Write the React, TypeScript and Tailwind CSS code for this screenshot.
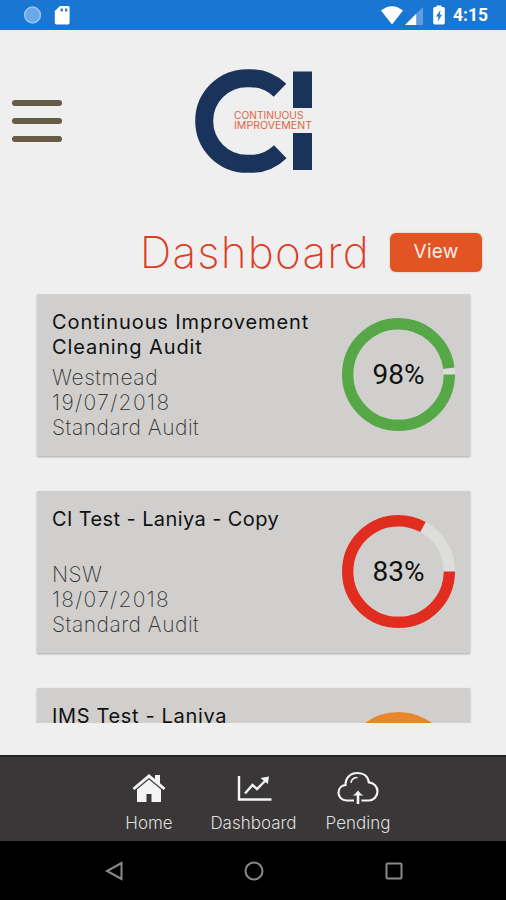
type Audit = {
  title: string[];
  titleClass: string[];
  details: { text: string; className: string }[];
  score: number;
  ring: string;
};

const audits: Audit[] = [
  {
    title: ["Continuous Improvement", "Cleaning Audit"],
    titleClass: ["tracking-[0.9px]", "tracking-[0.9px]"],
    details: [
      { text: "Westmead", className: "tracking-[0.6px]" },
      { text: "19/07/2018", className: "tracking-[1.4px]" },
      { text: "Standard Audit", className: "tracking-[0.5px]" },
    ],
    score: 98,
    ring: "#56a746",
  },
  {
    title: ["CI Test - Laniya - Copy"],
    titleClass: ["tracking-[0.4px]"],
    details: [
      { text: "NSW", className: "tracking-[0.4px]" },
      { text: "18/07/2018", className: "tracking-[1.3px]" },
      { text: "Standard Audit", className: "tracking-[0.5px]" },
    ],
    score: 83,
    ring: "#e02d20",
  },
  {
    title: ["IMS Test - Laniya"],
    titleClass: ["tracking-[0.65px]"],
    details: [],
    score: 90,
    ring: "#e9852b",
  },
];

function StatusBar() {
  return (
    <div className="flex h-[30px] shrink-0 items-center bg-[#1976d2] pl-6 pr-[18px] text-white">
      <svg width="18" height="18" viewBox="0 0 18 18">
        <circle cx="8.5" cy="9" r="8.5" fill="#69a9e8" />
        <path d="M14.5 3a8.5 8.5 0 0 1-10 13.5A8.6 8.6 0 0 0 16.5 6z" fill="#e3f0fd" />
        <circle cx="8.5" cy="9" r="7.8" fill="none" stroke="#a0c8f1" strokeWidth="1.2" />
      </svg>
      <svg className="ml-[12px]" width="16" height="20" viewBox="0 0 16 20">
        <path d="M6 1h8a1.6 1.6 0 0 1 1.6 1.6v15.2a1.6 1.6 0 0 1-1.6 1.6H2.4a1.6 1.6 0 0 1-1.6-1.6V6z" fill="#fff" />
        <path d="M6.5 3.6h2.4v3H6.5zM11 3.6h2.4v3H11z" fill="#3d83c9" />
      </svg>
      <svg className="ml-auto" width="22" height="20" viewBox="0 0 22 20">
        <path d="M0 5.6Q11-3.2 22 5.6L11 19.4z" fill="#fff" />
      </svg>
      <svg className="ml-[2px] mt-px" width="18" height="18" viewBox="0 0 18 18">
        <path d="M18 0v18H0z" fill="#5f9fdf" />
        <path d="M11.2 6.8V18H0z" fill="#fff" />
      </svg>
      <svg className="ml-[10px]" width="12" height="20" viewBox="0 0 12 20">
        <path
          d="M3.5 2V.5h5V2h1.7A1.6 1.6 0 0 1 11.8 3.6v14.2a1.6 1.6 0 0 1-1.6 1.6H1.8a1.6 1.6 0 0 1-1.6-1.6V3.6A1.6 1.6 0 0 1 1.8 2z"
          fill="#fff"
        />
        <path d="M7.500 5 3 11.500h2.500L4.700 16.500 9 9.800H6.700z" fill="#1976d2" />
      </svg>
      <span className="ml-[8px] mt-[2px] font-[Roboto,sans-serif] text-[17.5px] font-bold leading-none">4:15</span>
    </div>
  );
}

function Logo() {
  return (
    <svg width="120" height="106" viewBox="194 68 120 106">
      <path
        d="M280 90.300A42.800 42.800 0 0 0 249 78.200H247A42.800 42.800 0 0 0 247 163.800H249A42.800 42.800 0 0 0 280.300 151.700"
        fill="none"
        stroke="#1a335a"
        strokeWidth="18"
      />
      <path d="M293 71.500h19V108h-19zM293 133h19v37h-19z" fill="#1a335a" />
      <g fill="#e0643f" fontFamily="Inter, sans-serif" fontSize="9.8">
        <text x="234" y="119.300" textLength="69.500" lengthAdjust="spacingAndGlyphs">
          CONTINUOUS
        </text>
        <text x="234" y="129.200" textLength="78" lengthAdjust="spacingAndGlyphs">
          IMPROVEMENT
        </text>
      </g>
    </svg>
  );
}

function ScoreRing({ score, color }: { score: number; color: string }) {
  return (
    <div className="grid size-[113px] shrink-0 place-items-center">
      <svg className="col-start-1 row-start-1" width="113" height="113" viewBox="0 0 113 113">
        <circle cx="56.5" cy="56.5" r="50.8" fill="none" stroke="#dddddc" strokeWidth="11.4" />
        <circle
          cx="56.5"
          cy="56.5"
          r="50.8"
          fill="none"
          stroke={color}
          strokeWidth="11.4"
          pathLength="100"
          strokeDasharray={`${score} 100`}
        />
      </svg>
      <span className="col-start-1 row-start-1 font-[Roboto,sans-serif] text-[28px] leading-none text-[#111]">
        {score}%
      </span>
    </div>
  );
}

function AuditCard({ audit }: { audit: Audit }) {
  return (
    <article className="flex h-[162px] shrink-0 justify-between bg-[#d0cfcd] pl-[15px] pr-[15px] shadow-[0_1px_2px_rgba(0,0,0,0.3)]">
      <div className="w-[270px] pt-4">
        <h2 className="h-[50px] text-[20px] font-normal leading-[25px] text-[#111]">
          {audit.title.map((line, i) => (
            <span key={line} className={`block ${audit.titleClass[i]}`}>
              {line}
            </span>
          ))}
        </h2>
        <div className="mt-[5px] text-[21px] font-extralight leading-[25px] text-[#333]">
          {audit.details.map((row) => (
            <p key={row.text} className={row.className}>
              {row.text}
            </p>
          ))}
        </div>
      </div>
      <div className="pt-[24px]">
        <ScoreRing score={audit.score} color={audit.ring} />
      </div>
    </article>
  );
}

function HomeIcon() {
  return (
    <svg width="34" height="30" viewBox="0 0 34 30" fill="#f4f4f4">
      <path d="M17 1 23 6V2h5v8.300L33.500 15l-2 2L17 5 2.500 17l-2-2z" />
      <path d="M17 6.500 29 16.500V29h-9.500v-8h-5v8H5V16.500z" />
    </svg>
  );
}

function ChartIcon() {
  return (
    <svg width="36" height="30" viewBox="0 0 36 30" fill="none" stroke="#f4f4f4" strokeWidth="2.4">
      <path d="M3 3v23.500H35.500" />
      <path d="M9 20.500 16.500 12l4.500 4L29.500 7.500" />
      <path d="M24.500 5 33 3.500 31.800 11z" fill="#f4f4f4" stroke="none" />
    </svg>
  );
}

function CloudIcon() {
  return (
    <svg width="42" height="34" viewBox="0 0 42 34" fill="none" stroke="#f4f4f4" strokeWidth="2.2">
      <path d="M17 29.500H9.500C5 29.500 1.500 26.300 1.500 21.700c0-4.200 3-7.300 7-7.700C8.500 6.500 13.500 2 20.500 2c6 0 10.500 3.500 11.300 9.300 5 .5 8.700 4.200 8.700 9 0 5.200-3.800 9.200-8.500 9.200h-7.500" />
      <path d="M14 11.800c.5-3.500 3-5.300 6.500-5.300" strokeWidth="1.6" />
      <path d="M21 33V21.500" strokeWidth="2.6" />
      <path d="M15.500 24.500Q18.500 23 21 19.500q2.500 3.500 5.500 5z" fill="#f4f4f4" stroke="none" />
    </svg>
  );
}

const tabs = [
  { label: "Home", icon: <HomeIcon /> },
  { label: "Dashboard", icon: <ChartIcon /> },
  { label: "Pending", icon: <CloudIcon /> },
];

export default function App() {
  return (
    <div className="flex h-[900px] w-[506px] flex-col overflow-hidden bg-[#efefef] font-[Inter,sans-serif]">
      <StatusBar />

      <header className="flex h-[195px] shrink-0 items-start pl-[12px] pt-[38px]">
        <button aria-label="Menu" className="mt-[32px] flex w-[50px] flex-col gap-3">
          <span className="h-[6px] rounded-full bg-[#675a46]" />
          <span className="h-[6px] rounded-full bg-[#675a46]" />
          <span className="h-[6px] rounded-full bg-[#675a46]" />
        </button>
        <div className="ml-[132px]">
          <Logo />
        </div>
      </header>

      <div className="flex h-[69px] shrink-0 items-start justify-end pr-6">
        <h1 className="mr-[20px] mt-[2px] text-[44px] font-extralight leading-[50px] tracking-[1.2px] text-[#df3a22]">
          Dashboard
        </h1>
        <button className="mt-2 h-[39px] w-[92px] rounded-[6px] bg-[#e35425] text-[19px] font-normal tracking-[0.2px] text-[#fdeee8] shadow-[0_0_2px_rgba(227,84,37,0.5)]">
          View
        </button>
      </div>

      <main className="flex h-[429px] shrink-0 flex-col gap-[35px] overflow-hidden pl-[37px] pr-9">
        {audits.map((audit) => (
          <AuditCard key={audit.title[0]} audit={audit} />
        ))}
      </main>

      <nav className="mt-auto flex h-[86px] shrink-0 justify-center border-t-2 border-[#242323] bg-[#3a3738] pl-px">
        {tabs.map((tab) => (
          <a key={tab.label} className="flex w-[104.5px] flex-col items-center pt-[14px]">
            <span className="flex h-[34px] items-center">{tab.icon}</span>
            <span className="mt-2 text-[17px] font-light leading-5 text-[#dedede]">{tab.label}</span>
          </a>
        ))}
      </nav>

      <div className="flex h-[59px] shrink-0 items-center justify-center gap-[120px] bg-black pl-px">
        <svg width="20" height="20" viewBox="0 0 20 20" fill="none" stroke="#8a8a8a" strokeWidth="2">
          <path d="M17.500 2v16L3 10z" />
        </svg>
        <svg width="20" height="20" viewBox="0 0 20 20" fill="none" stroke="#8a8a8a" strokeWidth="2">
          <circle cx="10" cy="10" r="8.5" />
        </svg>
        <svg width="20" height="20" viewBox="0 0 20 20" fill="none" stroke="#8a8a8a" strokeWidth="2">
          <rect x="2.5" y="2.5" width="15" height="15" rx="1" />
        </svg>
      </div>
    </div>
  );
}
